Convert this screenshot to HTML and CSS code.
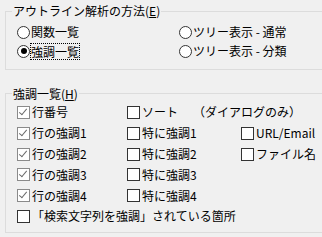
FILE: index.html
```html
<!DOCTYPE html>
<html lang="ja">
<head>
    <meta charset="UTF-8">
    <title>アウトライン解析</title>
    <link rel="stylesheet" href="styles.css">
</head>
<body>
    <fieldset class="group method">
        <legend>アウトライン解析の方法(<u>E</u>)</legend>
        <div class="radios">
            <label class="opt"><span class="radio"></span>関数一覧</label>
            <label class="opt"><span class="radio"></span>ツリー表示 - 通常</label>
            <label class="opt"><span class="radio on"></span><span class="focus">強調一覧</span></label>
            <label class="opt"><span class="radio"></span>ツリー表示 - 分類</label>
        </div>
    </fieldset>

    <fieldset class="group marks">
        <legend>強調一覧(<u>H</u>)</legend>
        <div class="checks">
            <label class="opt"><span class="box on"></span>行番号</label>
            <label class="opt wide"><span class="box"></span>ソート<span class="note">（ダイアログのみ）</span></label>

            <label class="opt"><span class="box on"></span>行の強調1</label>
            <label class="opt"><span class="box"></span>特に強調1</label>
            <label class="opt"><span class="box"></span>URL/Email</label>

            <label class="opt"><span class="box on"></span>行の強調2</label>
            <label class="opt"><span class="box"></span>特に強調2</label>
            <label class="opt"><span class="box"></span>ファイル名</label>

            <label class="opt"><span class="box on"></span>行の強調3</label>
            <label class="opt"><span class="box"></span>特に強調3</label>
            <span></span>

            <label class="opt"><span class="box on"></span>行の強調4</label>
            <label class="opt"><span class="box"></span>特に強調4</label>
            <span></span>

            <label class="opt full"><span class="box"></span>「検索文字列を強調」されている箇所</label>
        </div>
    </fieldset>
</body>
</html>
```

FILE: styles.css
```css
html, body {
    margin: 0;
    overflow: hidden;
}
body {
    background: #f0f0f0;
    color: #000;
    font-family: "MS UI Gothic", "Noto Sans CJK JP", sans-serif;
    font-size: 12px;
    line-height: 14px;
    width: 322px;
    height: 237px;
    padding: 4px 0 0 5px;
    box-sizing: border-box;
}
.group {
    border: 1px solid #dcdcdc;
    border-right: none;
    margin: 0;
    padding: 0 0 0 6px;
    min-width: 0;
}
.group legend {
    padding: 0 1px;
    height: 14px;
}
.group u {
    text-decoration: underline;
    text-underline-offset: 1px;
}
.method {
    padding-bottom: 8px;
}
.marks {
    margin-top: 17px;
    padding-bottom: 5px;
}
.radios {
    display: grid;
    grid-template-columns: 162px 1fr;
    grid-auto-rows: 19px;
    padding: 4.5px 0 0 5px;
}
.checks {
    display: grid;
    grid-template-columns: 110px 114px 1fr;
    grid-auto-rows: 20.8px;
    padding: 1.6px 0 0 5px;
}
.opt {
    display: flex;
    align-items: center;
    white-space: nowrap;
}
.wide {
    grid-column: span 2;
}
.full {
    grid-column: 1 / -1;
}
.note {
    margin-left: 15px;
}
.radio {
    width: 11px;
    height: 11px;
    border: 1px solid #333;
    border-radius: 50%;
    background: #fff;
    margin-right: 1px;
    display: flex;
    align-items: center;
    justify-content: center;
    flex: none;
}
.radio.on::after {
    content: "";
    width: 6px;
    height: 6px;
    border-radius: 50%;
    background: #000;
}
.focus {
    outline: 1px dotted #000;
    outline-offset: 0;
    line-height: 15px;
}
.box {
    width: 11px;
    height: 11px;
    border: 1px solid #333;
    background: #fff;
    margin-right: 2px;
    flex: none;
    position: relative;
}
.box.on {
    border-color: #8a8a8a;
}
.box.on::after {
    content: "";
    position: absolute;
    left: 3px;
    top: 0px;
    width: 3px;
    height: 7px;
    border: solid #6a6a6a;
    border-width: 0 1px 1px 0;
    transform: rotate(40deg);
}
```
